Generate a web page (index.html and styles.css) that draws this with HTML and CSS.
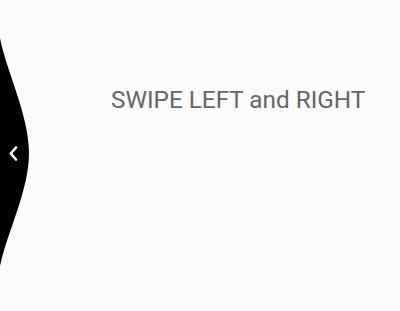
FILE: index.html
```html
<!DOCTYPE html>
<html>
<head>
<meta charset="utf-8">
<link rel="stylesheet" href="styles.css">
</head>
<body>
<div class="screen">
  <svg class="wave" width="40" height="311" viewBox="0 0 40 311">
    <path d="M0 38 C6 70, 29 115, 29 153 C29 190, 8 230, 0 266 Z" fill="#000"/>
    <path d="M16 147.5 L10.8 153.5 L16 159.5" fill="none" stroke="#fff" stroke-width="2.6" stroke-linecap="round" stroke-linejoin="round"/>
  </svg>
  <h1 class="title">SWIPE LEFT and RIGHT</h1>
</div>
</body>
</html>
```
FILE: styles.css
```css
html, body {
  margin: 0;
  padding: 0;
  background: #fafafa;
}
.screen {
  position: relative;
  width: 400px;
  height: 311px;
  overflow: hidden;
  padding-top: 86px;
  padding-left: 111px;
  box-sizing: border-box;
}
.wave {
  position: absolute;
  left: 0;
  top: 0;
}
.title {
  margin: 0;
  font-family: Roboto, "Liberation Sans", sans-serif;
  font-weight: 400;
  font-size: 24.3px;
  line-height: 28px;
  color: #666666;
  white-space: nowrap;
}
```
